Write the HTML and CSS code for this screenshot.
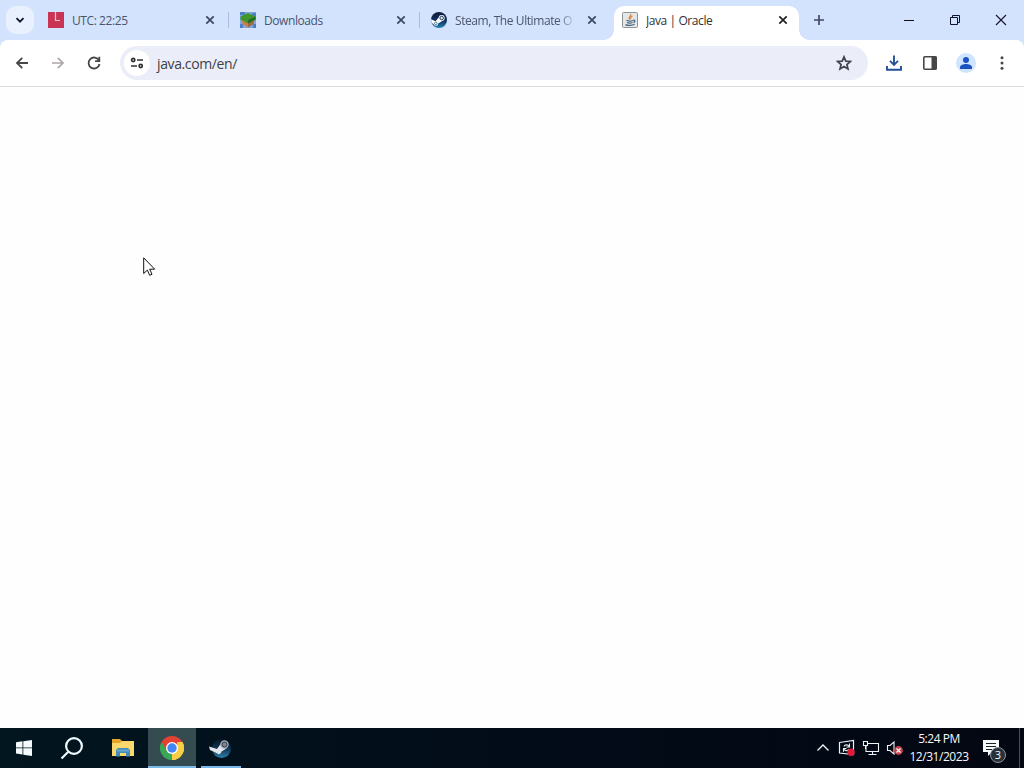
FILE: index.html
```html
<!DOCTYPE html>
<html lang="en">
<head>
<meta charset="UTF-8">
<meta name="viewport" content="width=device-width, initial-scale=1.0">
<title>Java | Oracle</title>
<link rel="stylesheet" href="styles.css">
</head>
<body>
<div class="desktop">
    <!-- tab strip -->
    <header class="tab-strip">
        <button class="tab-search" aria-label="Search tabs">
            <svg width="12" height="12" viewBox="0 0 12 12"><path d="M2.5 4.2 6 7.7l3.5-3.5" fill="none" stroke="#10152b" stroke-width="1.8"/></svg>
        </button>
        <div class="tabs">
            <div class="tab first divided">
                <svg class="favicon" viewBox="0 0 16 16"><path fill="#c93455" d="M0 0h16v16H0z"/><path d="M7.5 0v8.5H12" fill="none" stroke="#f3c4d0" stroke-width="1.2"/></svg>
                <span class="tab-title">UTC: 22:25</span>
                <svg class="close" viewBox="0 0 10 10"><path d="M1.3 1.3l7.4 7.4M8.7 1.3 1.3 8.7"/></svg>
            </div>
            <div class="tab divided">
                <svg class="favicon" viewBox="0 0 16 16">
                    <path fill="#7da7df" d="M0 0h16v16H0z"/>
                    <path fill="#4d7fc7" d="M0 0h5v3H0zM12 1h4v4h-4zM0 12h3v4H0zM13 12h3v4h-3z"/>
                    <path fill="#c87f4c" d="M1.500 7l6.500 3v5.500L2.500 12z"/>
                    <path fill="#a5653d" d="M14.500 7L8 10v5.500l5.500-3.500z"/>
                    <path fill="#41952d" d="M8 1l7.500 3.500V8L13 8.500l-2 1.500-3 1.500L5 10 3 8.500.5 8V4.500z"/>
                    <path fill="#246d24" d="M8 8l7.500-3.500V8L13 8.500l-2 1.500-3 1.500z"/>
                </svg>
                <span class="tab-title">Downloads</span>
                <svg class="close" viewBox="0 0 10 10"><path d="M1.3 1.3l7.4 7.4M8.7 1.3 1.3 8.7"/></svg>
            </div>
            <div class="tab">
                <svg class="favicon" viewBox="0 0 16 16">
                    <defs><linearGradient id="steam" x1="0" y1="0" x2="0" y2="1"><stop offset="0" stop-color="#101a3c"/><stop offset=".55" stop-color="#10305c"/><stop offset="1" stop-color="#2385b5"/></linearGradient></defs>
                    <circle cx="8" cy="8" r="8" fill="url(#steam)"/>
                    <path fill="#fff" d="M0 7.3l4.6 2 3-3.9 3.6 3.7-4 2.3a2.4 2.4 0 0 1-4.7.7L.5 10.8z"/>
                    <circle cx="10.7" cy="6" r="3" fill="#fff"/><circle cx="10.7" cy="6" r="1.8" fill="#dce4ec" stroke="#16325a" stroke-width=".9"/>
                    <circle cx="4.8" cy="11.4" r="1.3" fill="none" stroke="#16466f" stroke-width=".7"/>
                </svg>
                <span class="tab-title fade">Steam, The Ultimate O</span>
                <svg class="close" viewBox="0 0 10 10"><path d="M1.3 1.3l7.4 7.4M8.7 1.3 1.3 8.7"/></svg>
            </div>
            <div class="tab active">
                <svg class="favicon" viewBox="0 0 16 16">
                    <rect x=".5" y=".5" width="15" height="15" rx="1" fill="#e4e7e9" stroke="#8d9498"/>
                    <path d="M8.8 2c1 2-3.2 2.800-1.200 5.600M10.500 4c-1.800.8-2.500 1.600-1.500 3.200" fill="none" stroke="#df8740" stroke-width="1.300"/>
                    <path d="M4.500 8.300c1.500 1 5 .8 6.500.200M5 10.400c1.500.8 4 .7 5.500.1M3.500 12.600c2 1.200 7 1 9-.3M11.300 8.300c2-.4 2 1.600.2 2.300" fill="none" stroke="#46647b" stroke-width="1.300"/>
                </svg>
                <span class="tab-title">Java | Oracle</span>
                <svg class="close" viewBox="0 0 10 10"><path d="M1.3 1.3l7.4 7.4M8.7 1.3 1.3 8.7"/></svg>
            </div>
        </div>
        <svg class="new-tab" viewBox="0 0 12 12"><path d="M6 1v10M1 6h10" stroke="#414a66" stroke-width="1.700"/></svg>
        <div class="window-controls">
            <svg viewBox="0 0 12 12"><path d="M1 6.500h10" stroke="#111"/></svg>
            <svg viewBox="0 0 12 12"><path d="M1.500 3.500h7v7h-7zM3.500 3.500v-2h7v7h-2" fill="none" stroke="#111428"/></svg>
            <svg viewBox="0 0 12 12"><path d="M1 1l10 10M11 1 1 11" stroke="#111428" stroke-width="1.100"/></svg>
        </div>
    </header>

    <!-- toolbar -->
    <div class="toolbar-wrap">
        <nav class="toolbar">
            <div class="nav-buttons">
                <svg viewBox="0 0 16 16"><path d="M14 8H3.500M8.200 2.800 3 8l5.200 5.200" fill="none" stroke="#474747" stroke-width="1.800"/></svg>
                <svg viewBox="0 0 16 16"><path d="M2 8h10.500M7.800 2.800 13 8l-5.200 5.200" fill="none" stroke="#ada7a5" stroke-width="1.700"/></svg>
                <svg viewBox="0 0 16 16"><path d="M13 5.500A5.500 5.500 0 1 0 13.500 9" fill="none" stroke="#454545" stroke-width="1.800"/><path d="M14.200 1.800v5.100H9.100V5.200h3.400V1.800z" fill="#454545"/></svg>
            </div>
            <div class="address-bar">
                <span class="site-info">
                    <svg width="14" height="12" viewBox="0 0 14 12" fill="none" stroke="#303030" stroke-width="1.700"><circle cx="3.200" cy="3" r="1.600"/><path d="M7 3h6M1 9h6"/><circle cx="10.700" cy="9" r="1.600"/></svg>
                </span>
                <span class="url">java.com/en/</span>
                <svg class="star" viewBox="0 0 16 16"><path d="M8 1.900l1.800 4.200 4.600.4-3.500 3 1.100 4.500L8 11.600 4 14l1.100-4.500-3.500-3 4.600-.4z" fill="none" stroke="#42434d" stroke-width="1.700"/></svg>
            </div>
            <div class="actions">
                <svg viewBox="0 0 16 16"><path d="M8 .500v9M4 5.800l4 4 4-4M1 11v3.700h14V11" fill="none" stroke="#244f98" stroke-width="1.900"/></svg>
                <svg viewBox="0 0 16 16"><rect x="1.800" y="1.800" width="12.400" height="12.400" rx="1" fill="#fff" stroke="#474747" stroke-width="1.600"/><path d="M9.500 1.500h5v13h-5z" fill="#474747"/></svg>
                <span class="profile"><svg viewBox="0 0 16 16"><circle cx="8" cy="5" r="3" fill="#1b54c0"/><path d="M2 14v-1.700C2 10 5.500 9 8 9s6 1 6 3.300V14z" fill="#1b54c0"/></svg></span>
                <svg viewBox="0 0 16 16" fill="#474747"><circle cx="8" cy="2.700" r="1.500"/><circle cx="8" cy="8" r="1.500"/><circle cx="8" cy="13.300" r="1.500"/></svg>
            </div>
        </nav>
    </div>

    <main class="page"></main>

    <!-- taskbar -->
    <footer class="taskbar">
        <div class="task">
            <svg width="16" height="16" viewBox="0 0 16 16" fill="#f4fafc"><path d="M0 2.200l6.500-.9v6.200H0zM7.300 1.200 16 0v7.500H7.300zM0 8.300h6.500v6.200L0 13.600zM7.300 8.300H16V16l-8.700-1.200z"/></svg>
        </div>
        <div class="task">
            <svg width="24" height="24" viewBox="0 0 24 24" fill="none" stroke="#edf9fb" stroke-width="2.200"><circle cx="14" cy="10" r="7.900"/><path d="M8.300 15.700 1.500 22.500"/></svg>
        </div>
        <div class="task files">
            <svg width="22" height="20" viewBox="0 0 22 20"><path fill="#e5a52b" d="M0 1h8l2 2h12v5H0z"/><path fill="#fbd86b" d="M0 5h8l2-2h12v15H0z"/><path fill="#438eb9" d="M4 18.500V12l2-2h10l2 2v6.500h-4V15H8v3.500z"/><path fill="#62a9d3" d="M5 11.500h12v2H5z"/></svg>
        </div>
        <div class="task open focused">
            <svg width="24" height="24" viewBox="0 0 24 24">
                <path fill="#e34133" d="M12 12 1.600 6A12 12 0 0 1 22.400 6z"/>
                <path fill="#f8ce45" d="M12 12 22.400 6A12 12 0 0 1 12 24z"/>
                <path fill="#3aa757" d="M12 12v12A12 12 0 0 1 1.600 6z"/>
                <path fill="#e34133" d="M12 6h10.400L20 4 12 2 1.600 6l5.200 9z"/>
                <path fill="#f8ce45" d="M12 24l5.200-9L17.200 6h5.200A12 12 0 0 1 12 24z"/>
                <circle cx="12" cy="12" r="6" fill="#fff"/><circle cx="12" cy="12" r="4.700" fill="#4285f4"/>
            </svg>
        </div>
        <div class="task open steam-task">
            <svg width="24" height="22" viewBox="0 0 24 22">
                <defs><linearGradient id="steam2" x1="0" y1="0" x2="0" y2="1"><stop offset="0" stop-color="#061524"/><stop offset=".5" stop-color="#0f3350"/><stop offset="1" stop-color="#2b82b0"/></linearGradient></defs>
                <circle cx="12.500" cy="11.500" r="9.500" fill="url(#steam2)"/>
                <path fill="#dfe4ed" d="M0 9.500l8 2.500 4-5.500 5.500 5-5 3c-.5 3-4 3.500-5 1.500L1 13z"/>
                <circle cx="15.500" cy="7.500" r="4.200" fill="#a4abb5"/><circle cx="15.500" cy="7.500" r="2.500" fill="#7d858f" stroke="#353e4b"/>
            </svg>
        </div>
        <div class="tray">
            <svg class="chevron" width="14" height="10" viewBox="0 0 14 10"><path d="M1.500 7.500 7 2l5.500 5.500" fill="none" stroke="#f3f6f8" stroke-width="1.300"/></svg>
            <svg class="update" width="18" height="18" viewBox="0 0 18 18"><path d="M1.500 3.500l14-2v14l-14-1.500z" fill="none" stroke="#eef2f4" stroke-width="1.200"/><path d="M6 7.500c.8-2 4-2.200 5-.2M11.500 4.500V8H8.400M11 10c-.8 2-4 2.200-5 .2M5.500 12.800V9.500h3" fill="none" stroke="#eef2f4" stroke-width="1.100"/><circle cx="13" cy="13.300" r="3.700" fill="#e01d38"/></svg>
            <svg class="network" width="18" height="16" viewBox="0 0 18 16" fill="none" stroke="#eef2f4" stroke-width="1.100"><path d="M5 3.500h11.500v8H4V6M10.500 11.500v3M6.500 14.500h8"/><path d="M1.500 1.500h4v4h-4zM3.500 5.500v3.500"/></svg>
            <svg class="sound" width="18" height="16" viewBox="0 0 18 16"><path d="M1.500 5.500h2.500l4-3.500v12l-4-3.500H1.500z" fill="none" stroke="#eef2f4" stroke-width="1.100"/><circle cx="12.500" cy="10.500" r="4.400" fill="#c6404a"/><path d="M10.500 8.500l4 4M14.500 8.500l-4 4" stroke="#fff" stroke-width="1.200"/></svg>
            <div class="clock"><span class="time">5:24 PM</span><span class="date">12/31/2023</span></div>
            <div class="notifications">
                <svg width="16" height="16" viewBox="0 0 16 16"><path fill="#f7fafb" d="M0 0h16v12H9l-4 4v-4H0z"/><path d="M3 3.500h10M3 6.500h10M3 9.500h6" stroke="#17222c"/></svg>
                <span class="badge">3</span>
            </div>
            <div class="show-desktop"></div>
        </div>
    </footer>

    <svg class="cursor" width="13" height="20" viewBox="0 0 13 20"><path d="M.7.800v15.700l3.700-3.400 2.300 5.200 2.300-1-2.300-5.100h5z" fill="#fff" stroke="#111" stroke-width="1"/></svg>
</div>
</body>
</html>
```
FILE: styles.css
```css
body {
    margin: 0;
    overflow: hidden;
    font-family: "Open Sans", "Noto Sans", sans-serif;
    color: #202124;
}
svg {
    display: block;
    flex: none;
}
.desktop {
    position: relative;
    width: 1024px;
    height: 768px;
    display: flex;
    flex-direction: column;
    background-color: #fefefe;
}
.tab-strip {
    height: 40px;
    display: flex;
    box-sizing: border-box;
    padding-left: 6px;
    background-color: #d3e3fd;
}
.tab-search {
    width: 28px;
    height: 28px;
    margin: 6px 7px 0 0;
    padding: 0;
    display: flex;
    align-items: center;
    justify-content: center;
    border: none;
    border-radius: 10px;
    background-color: #e9f1fe;
}
.tabs {
    display: flex;
    gap: 6px;
    padding-top: 6px;
}
.tab {
    position: relative;
    width: 185px;
    height: 34px;
    box-sizing: border-box;
    padding: 0 11px 6px 8px;
    display: flex;
    align-items: center;
    font-size: 12px;
    letter-spacing: -0.42px;
    color: #4a546b;
}
.first {
    padding-left: 7px;
}
.divided::after {
    content: "";
    position: absolute;
    right: -3px;
    top: 6px;
    width: 1px;
    height: 16px;
    background-color: #a9bddf;
}
.favicon {
    width: 16px;
    height: 16px;
    margin-right: 8px;
}
.tab-title {
    flex: 1;
    overflow: hidden;
    white-space: nowrap;
    line-height: 18px;
    padding-top: 2px;
    margin-right: 10px;
}
.fade {
    -webkit-mask-image: linear-gradient(to right, #000 84%, transparent);
    mask-image: linear-gradient(to right, #000 84%, transparent);
}
.close {
    width: 10px;
    height: 10px;
    stroke: #3c4664;
    stroke-width: 1.7;
}
.active {
    background-color: #fff;
    border-radius: 10px 10px 0 0;
    color: #333;
}
.active .close {
    stroke: #222;
}
/* outward curves at the foot of the active tab */
.active::before, .active::after {
    content: "";
    position: absolute;
    bottom: 0;
    width: 10px;
    height: 10px;
}
.active::before {
    left: -10px;
    background: radial-gradient(circle at 0 0, transparent 9.5px, #fff 10px);
}
.active::after {
    right: -10px;
    background: radial-gradient(circle at 100% 0, transparent 9.5px, #fff 10px);
}
.new-tab {
    width: 12px;
    height: 12px;
    margin: 14px 0 0 14px;
}
.window-controls {
    display: flex;
    align-items: center;
    gap: 34px;
    margin-left: auto;
    padding-right: 17px;
}
.window-controls svg {
    width: 12px;
    height: 12px;
}
.toolbar-wrap {
    background-color: #d3e3fd;
}
.toolbar {
    height: 47px;
    box-sizing: border-box;
    display: flex;
    align-items: center;
    padding: 0 14px;
    background-color: #fff;
    border-bottom: 1px solid #dcdcde;
    border-radius: 8px 8px 0 0;
}
.nav-buttons, .actions {
    display: flex;
    align-items: center;
    gap: 20px;
}
.nav-buttons svg, .actions svg, .star {
    width: 16px;
    height: 16px;
}
.address-bar {
    width: 748px;
    height: 34px;
    box-sizing: border-box;
    margin: 0 18px;
    padding: 0 16px 0 4px;
    display: flex;
    align-items: center;
    border-radius: 17px;
    background-color: #ebeef8;
}
.site-info {
    width: 26px;
    height: 26px;
    display: flex;
    align-items: center;
    justify-content: center;
    border-radius: 50%;
    background-color: #fff;
}
.url {
    flex: 1;
    margin-left: 7px;
    font-size: 14px;
    letter-spacing: -0.38px;
    color: #404147;
}
.profile {
    width: 20px;
    height: 20px;
    margin: 0 -2px;
    display: flex;
    align-items: center;
    justify-content: center;
    border-radius: 50%;
    background-color: #cfe4ff;
}
.page {
    flex: 1;
}
.taskbar {
    height: 40px;
    display: flex;
    background: linear-gradient(to right, #02161f, #020c18 50%, #030712);
}
.task {
    width: 48px;
    height: 40px;
    box-sizing: border-box;
    display: flex;
    align-items: center;
    justify-content: center;
}
.files {
    width: 54px;
}
.open {
    border-bottom: 2px solid #79b8e8;
    padding-top: 2px;
}
.focused {
    margin-left: -2px;
    background-color: #344b50;
}
.steam-task {
    width: 40px;
    margin-left: 5px;
}
.tray {
    display: flex;
    align-items: center;
    margin-left: auto;
    color: #f7f9fa;
}
.update {
    margin-left: 8px;
}
.network {
    margin-left: 6px;
}
.sound {
    margin-left: 6px;
}
.clock {
    width: 62px;
    margin-left: 4px;
    display: flex;
    flex-direction: column;
    align-items: center;
    font-size: 12px;
    line-height: 18px;
    letter-spacing: -0.45px;
    white-space: nowrap;
}
.notifications {
    position: relative;
    margin: 0 20px 0 13px;
}
.badge {
    position: absolute;
    left: 7px;
    top: 7px;
    width: 14px;
    height: 14px;
    border: 1px solid #8c949b;
    border-radius: 50%;
    background-color: #27313a;
    font-size: 11px;
    line-height: 14px;
    text-align: center;
}
.show-desktop {
    width: 4px;
    height: 40px;
    border-left: 1px solid #45505a;
}
.cursor {
    position: absolute;
    left: 143px;
    top: 257px;
}
```
